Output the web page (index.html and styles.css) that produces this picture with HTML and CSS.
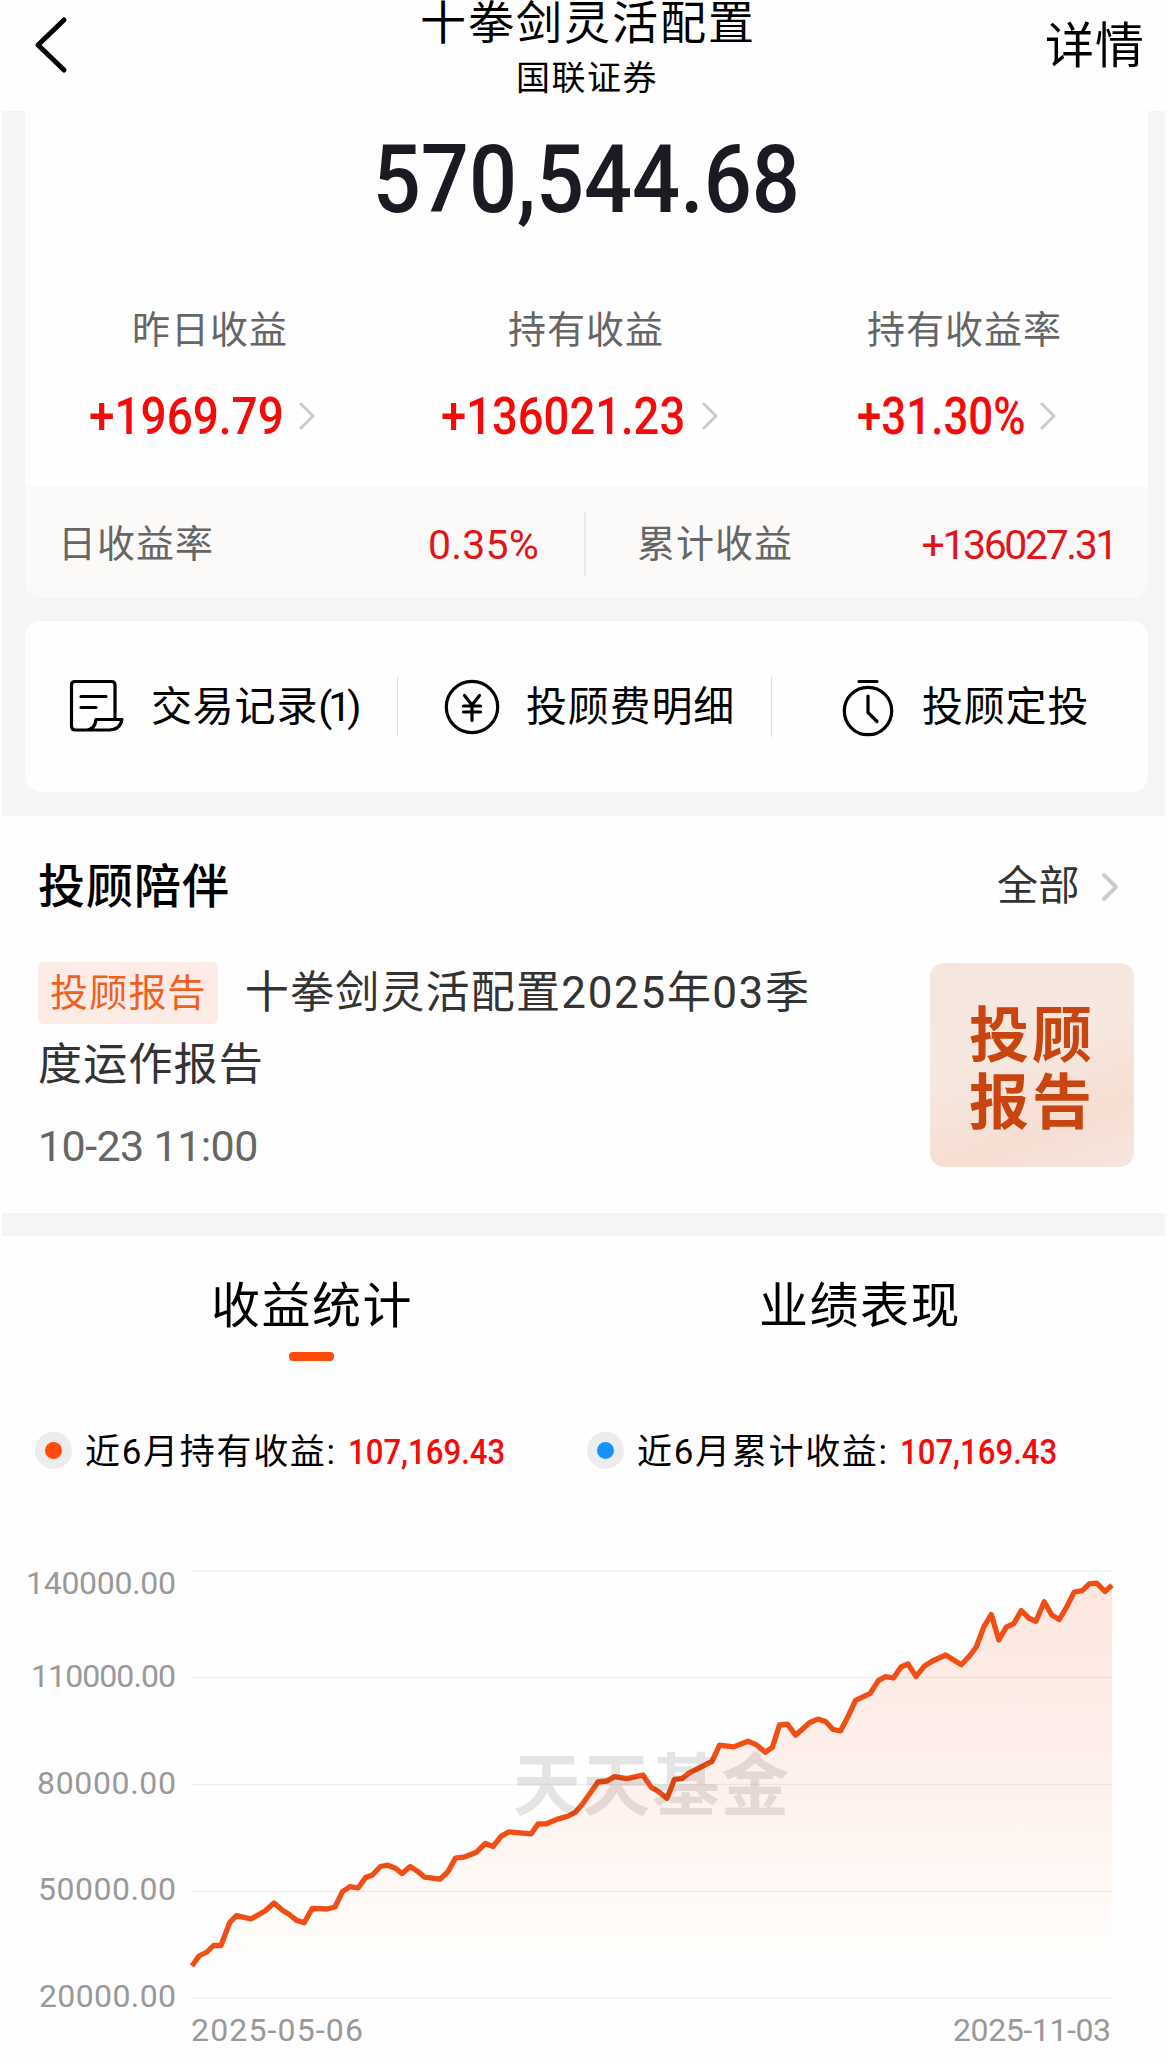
FILE: index.html
```html
<!DOCTYPE html>
<html lang="zh-CN">
<head>
<meta charset="utf-8">
<title>十拳剑灵活配置</title>
<link rel="stylesheet" href="styles.css">
</head>
<body>
<div class="page">
  <header class="topbar">
    <svg class="back" width="34" height="60" viewBox="0 0 34 60"><path d="M30 5 L4 30 L30 55" fill="none" stroke="#000" stroke-width="5" stroke-linecap="round" stroke-linejoin="round"/></svg>
    <div class="titles">
      <h1 class="title">十拳剑灵活配置</h1>
      <p class="subtitle">国联证券</p>
    </div>
    <a class="detail">详情</a>
  </header>

  <div class="backdrop">
    <section class="asset">
      <div class="total"><span class="total-num">570,544.68</span></div>
      <div class="stats">
        <div class="stat stat-a">
          <span class="stat-label">昨日收益</span>
          <span class="stat-value"><b class="red">+1969.79</b><svg class="chev" width="18" height="28" viewBox="0 0 18 28"><path d="M3 2 L15 14 L3 26"/></svg></span>
        </div>
        <div class="stat stat-b">
          <span class="stat-label">持有收益</span>
          <span class="stat-value"><b class="red">+136021.23</b><svg class="chev" width="18" height="28" viewBox="0 0 18 28"><path d="M3 2 L15 14 L3 26"/></svg></span>
        </div>
        <div class="stat stat-c">
          <span class="stat-label">持有收益率</span>
          <span class="stat-value"><b class="red">+31.30%</b><svg class="chev" width="18" height="28" viewBox="0 0 18 28"><path d="M3 2 L15 14 L3 26"/></svg></span>
        </div>
      </div>
      <div class="strip">
        <div class="strip-cell strip-left"><span>日收益率</span><span class="strip-num">0.35%</span></div>
        <div class="strip-cell strip-right"><span>累计收益</span><span class="strip-num strip-num-long">+136027.31</span></div>
      </div>
    </section>

    <nav class="actions">
      <a class="action action-a">
        <svg width="56" height="56" viewBox="0 0 56 56" class="line-icon"><path d="M46 40 V6 Q46 2.500 42.500 2.500 H6 Q2.500 2.500 2.500 6 V47 Q2.500 51 6 51 H40 Q51 51 53 40.500 H27 Q26 50 18 51 M12 17.500 H37 M12 28.500 H27"/></svg>
        <span class="action-text">交易记录<i class="paren">(1)</i></span>
      </a>
      <a class="action action-b">
        <svg width="56" height="56" viewBox="0 0 56 56" class="line-icon"><circle cx="28" cy="28" r="25.700"/><path d="M20.500 16.500 L28 26 L35.500 16.500 M28 26 V41.500 M19.500 27 H36.500 M19.500 33 H36.500"/></svg>
        <span class="action-text">投顾费明细</span>
      </a>
      <a class="action action-c">
        <svg width="52" height="60" viewBox="0 0 52 60" class="line-icon"><circle cx="26" cy="34" r="23.700"/><path d="M17 4.500 H35 M26 19 V35.500 L35 44.500"/></svg>
        <span class="action-text">投顾定投</span>
      </a>
    </nav>
  </div>

  <section class="advice">
    <div class="advice-head">
      <h2>投顾陪伴</h2>
      <a class="all">全部<svg class="chev chev-bold" width="20" height="32" viewBox="0 0 20 32"><path d="M3 4 L15 16 L3 28"/></svg></a>
    </div>
    <div class="advice-body">
      <div class="advice-text">
        <p class="report"><span class="tag">投顾报告</span>十拳剑灵活配置<span class="report-num">2025</span>年<span class="report-num">03</span>季<br>度运作报告</p>
        <time class="when">10-23 11:00</time>
      </div>
      <div class="thumb"><span>投顾</span><span>报告</span></div>
    </div>
  </section>

  <section class="earnings">
    <div class="tabs">
      <a class="tab tab-on">收益统计</a>
      <a class="tab">业绩表现</a>
    </div>
    <div class="legend">
      <div class="legend-item"><i class="dot dot-orange"></i><span class="legend-name">近6月持有收益:</span><b class="legend-num">107,169.43</b></div>
      <div class="legend-item"><i class="dot dot-blue"></i><span class="legend-name">近6月累计收益:</span><b class="legend-num">107,169.43</b></div>
    </div>
    <svg class="chart" width="1168" height="524" viewBox="0 1540 1168 524">
      <defs>
        <linearGradient id="area" gradientUnits="userSpaceOnUse" x1="0" y1="1583" x2="0" y2="1998">
          <stop offset="0" stop-color="#fde6df"/>
          <stop offset="0.5" stop-color="#fef1ed"/>
          <stop offset="0.8" stop-color="#fffbf8"/>
          <stop offset="1" stop-color="#fff"/>
        </linearGradient>
      </defs>
      <path fill="url(#area)" d="M192 1965 L199 1956 207 1952 213.500 1945.500 221 1945.500 229.600 1922.700 236.500 1915.700 251 1919 265 1911 274 1903 282.400 1910.300 289 1914.300 296.600 1920.400 304.200 1922.700 312.300 1908.300 327 1909 335 1907 342.500 1891.600 350 1886.600 358 1888 365.500 1877.600 372.400 1875 380.400 1866.500 387.700 1865.200 395.300 1868.200 402.200 1873.600 410.300 1866.500 418 1871.600 424.800 1877.200 440 1879.200 447.800 1871.900 455.400 1858.200 465 1856.800 476.500 1852.200 485.300 1843.500 493 1846.500 501.300 1836.100 509 1831.800 531.200 1833.800 538 1824 546.500 1823.800 556.800 1819.400 568.300 1816 575.200 1812.400 582.500 1804 598 1782 607 1781 614.500 1776.600 626.900 1778.600 643 1775 651.200 1787.300 658.700 1791.700 667 1798.400 674.500 1779.300 682 1778.600 688.700 1773.300 712 1761.300 719.500 1745.200 733.700 1746.900 748 1741.200 757 1745.200 765.200 1752.200 772.400 1747.200 779.500 1724.800 787.400 1724.200 795.600 1735.200 809.800 1722.500 818 1719.100 825.600 1721.500 833.100 1729.500 840.600 1730.800 848 1716.500 855.600 1700.400 870.200 1693.400 878.500 1680.400 885.600 1676.700 893.500 1678 901 1667 908 1664 916 1676.400 924.200 1666.300 932.500 1661 945.600 1655 961.300 1664.700 969.200 1656.300 976.300 1647 983.800 1626.900 991.300 1614.500 998.800 1639.900 1006.300 1627.200 1013.800 1623.600 1021.300 1610.500 1028.800 1618.200 1036 1621.200 1044.200 1601.800 1051.700 1614.900 1059.200 1619.500 1066.700 1606.800 1074.200 1592.100 1082.500 1590.500 1089.200 1583.800 1096.700 1583.100 1105 1591.500 1112 1585.100 V1998 H192 Z"/>
      <g class="grid"><path d="M192 1571 H1112 M192 1677.500 H1112 M192 1784.500 H1112 M192 1891.500 H1112 M192 1998 H1112"/></g>
      <path class="curve" d="M192 1966 L199 1956 207 1952 213.500 1945.500 221 1945.500 229.600 1922.700 236.500 1915.700 251 1919 265 1911 274 1903 282.400 1910.300 289 1914.300 296.600 1920.400 304.200 1922.700 312.300 1908.300 327 1909 335 1907 342.500 1891.600 350 1886.600 358 1888 365.500 1877.600 372.400 1875 380.400 1866.500 387.700 1865.200 395.300 1868.200 402.200 1873.600 410.300 1866.500 418 1871.600 424.800 1877.200 440 1879.200 447.800 1871.900 455.400 1858.200 465 1856.800 476.500 1852.200 485.300 1843.500 493 1846.500 501.300 1836.100 509 1831.800 531.200 1833.800 538 1824 546.500 1823.800 556.800 1819.400 568.300 1816 575.200 1812.400 582.500 1804 598 1782 607 1781 614.500 1776.600 626.900 1778.600 643 1775 651.200 1787.300 658.700 1791.700 667 1798.400 674.500 1779.300 682 1778.600 688.700 1773.300 712 1761.300 719.500 1745.200 733.700 1746.900 748 1741.200 757 1745.200 765.200 1752.200 772.400 1747.200 779.500 1724.800 787.400 1724.200 795.600 1735.200 809.800 1722.500 818 1719.100 825.600 1721.500 833.100 1729.500 840.600 1730.800 848 1716.500 855.600 1700.400 870.200 1693.400 878.500 1680.400 885.600 1676.700 893.500 1678 901 1667 908 1664 916 1676.400 924.200 1666.300 932.500 1661 945.600 1655 961.300 1664.700 969.200 1656.300 976.300 1647 983.800 1626.900 991.300 1614.500 998.800 1639.900 1006.300 1627.200 1013.800 1623.600 1021.300 1610.500 1028.800 1618.200 1036 1621.200 1044.200 1601.800 1051.700 1614.900 1059.200 1619.500 1066.700 1606.800 1074.200 1592.100 1082.500 1590.500 1089.200 1583.800 1096.700 1583.100 1105 1591.500 1112 1585.100"/>
      <text class="watermark" x="513" y="1810" textLength="276">天天基金</text>
      <g class="axis">
        <text x="26" y="1593.500" textLength="150">140000.00</text>
        <text x="31" y="1686.500" textLength="145">110000.00</text>
        <text x="37" y="1793.500" textLength="139">80000.00</text>
        <text x="38" y="1899.500" textLength="138">50000.00</text>
        <text x="39" y="2006.500" textLength="137">20000.00</text>
        <text x="191" y="2040.500" textLength="172">2025-05-06</text>
        <text x="953" y="2040.500" textLength="158">2025-11-03</text>
      </g>
    </svg>
  </section>
</div>
</body>
</html>
```
FILE: styles.css
```css
* { box-sizing: border-box; margin: 0; padding: 0; }
body {
  background: #fefefe;
  color: #000;
  font-family: Roboto, "Noto Sans CJK SC", sans-serif;
}
.page { width: 1168px; height: 2064px; overflow: hidden; line-height: 1; }
h1, h2, b { font-weight: 400; }
i { font-style: normal; }
svg { flex: none; display: block; }

.topbar { display: flex; justify-content: space-between; height: 111px; padding: 0 23px 0 34px; }
.back { margin-top: 15px; }
.titles { display: flex; flex-direction: column; align-items: center; padding-left: 61px; }
.title { font-size: 46px; letter-spacing: 2px; line-height: 46px; margin-right: -2px; }
.subtitle { font-size: 34px; letter-spacing: 1.5px; line-height: 34px; margin-top: 15px; }
.detail { font-size: 49px; letter-spacing: 1px; line-height: 49px; margin-top: 22px; }

.backdrop { height: 705px; margin: 0 3px 0 2px; padding: 0 17px 0 23px; background: #f5f5f5; }
.asset { display: flex; flex-direction: column; height: 487px; background: #fefefe; border-radius: 0 0 16px 16px; overflow: hidden; }
.total { height: 138px; display: flex; justify-content: center; align-items: center; }
.total-num { font-size: 94px; font-weight: 500; color: #1a1a22; transform: scaleX(.9); }
.stats { display: flex; height: 237px; padding-top: 62px; }
.stat { display: flex; flex-direction: column; gap: 48px; }
.stat-label { font-size: 38px; letter-spacing: 1px; line-height: 38px; color: #666; }
.stat-value { display: flex; align-items: center; height: 38px; }
.red { color: #f50a0a; font-size: 51px; font-weight: 500; transform: scaleX(.9); transform-origin: left; }
.stat-a { width: 352px; padding-left: 64px; }
.stat-b { width: 416px; padding-left: 64px; }
.stat-c { width: 355px; padding-left: 64px; }
.stat-a .stat-label { padding-left: 43px; }
.stat-b .stat-label { padding-left: 67px; }
.stat-c .stat-label { padding-left: 10px; }
.stat-b .red { transform: scaleX(.89); }
.stat-c .red { transform: scaleX(.86); }
.chev { fill: none; stroke: #ccc; stroke-width: 3; stroke-linecap: round; stroke-linejoin: round; margin-left: -7px; }
.stat-b .chev, .stat-c .chev { margin-left: -14px; }
.advice .chev-bold { stroke-width: 4; margin-left: 21px; }
.strip { display: flex; align-items: center; height: 112px; padding: 4px 0 0 33px; background: #fbfaf8; color: #666; font-size: 38px; letter-spacing: 1px; }
.strip-cell { display: flex; justify-content: space-between; align-items: center; height: 64px; }
.strip-left { width: 528px; padding-right: 45px; border-right: 2px solid #e8e8e8; }
.strip-right { width: 530px; padding-left: 51px; }
.strip-num { color: #e0151a; font-size: 41px; letter-spacing: .2px; padding-top: 2px; }
.strip-num-long { letter-spacing: -2.4px; }

.actions { display: flex; align-items: center; height: 171px; margin-top: 23px; background: #fefefe; border-radius: 16px; }
.action { display: flex; align-items: center; height: 60px; font-size: 41px; letter-spacing: .8px; white-space: nowrap; }
.action + .action { border-left: 1px solid #ddd; }
.action-text { padding-top: 2px; }
.line-icon { fill: none; stroke: #000; stroke-width: 3.2; stroke-linecap: round; stroke-linejoin: round; }
.action-a { width: 372px; padding-left: 44px; gap: 26px; }
.action-b { width: 374px; padding-left: 46px; gap: 26px; }
.action-c { padding-left: 70px; gap: 28px; }
.paren { letter-spacing: -4px; }

.advice { height: 397px; padding: 0 34px 0 38px; }
.advice-head { display: flex; justify-content: space-between; align-items: center; height: 139px; padding: 2px 13px 0 0; }
.advice-head h2 { font-size: 47px; font-weight: 500; letter-spacing: 1px; }
.all { display: flex; align-items: center; font-size: 41px; letter-spacing: .5px; color: #333; }
.advice-body { display: flex; justify-content: space-between; }
.advice-text { padding-top: 2px; }
.report { font-size: 44px; letter-spacing: 1.200px; line-height: 72px; color: #333; white-space: nowrap; }
.tag { display: inline-block; height: 62px; margin: -3px 27px 0 0; padding: 0 11px 0 12px; border-radius: 6px; background: #fdece6; color: #f0601f; font-size: 38px; letter-spacing: 1.200px; line-height: 63px; vertical-align: middle; transform: translateY(-2px); }
.report-num { letter-spacing: 1.7px; }
.when { display: block; margin-top: 24px; font-size: 43px; letter-spacing: -.6px; color: #666; }
.thumb { display: flex; flex-direction: column; align-items: center; gap: 7px; width: 204px; height: 204px; margin-top: 8px; padding-top: 44px; border-radius: 14px; background: linear-gradient(160deg, #f5e6dd, #f6e7df 45%, #f6ded2 75%, #f6e6df); color: #c8450f; font-size: 60px; font-weight: 700; letter-spacing: 3px; line-height: 60px; }

.earnings::before { content: ""; display: block; height: 23px; margin: 0 3px 0 2px; background: #f5f5f5; }
.tabs { display: flex; justify-content: space-around; height: 150px; padding: 46px 34px 0 38px; }
.tab { display: flex; flex-direction: column; align-items: center; gap: 21px; font-size: 49px; letter-spacing: 1.500px; }
.tab-on::after { content: ""; width: 45px; height: 9px; border-radius: 4px; background: #ff4a0a; }
.legend { display: flex; height: 154px; padding: 46px 0 0 35px; }
.legend-item { display: flex; align-items: center; width: 552px; height: 37px; }
.dot { width: 37px; height: 37px; border-radius: 50%; border: 10px solid #ececec; }
.dot-orange { background: #ff4a0a; }
.dot-blue { background: #1890ff; }
.legend-name { width: 263px; margin-left: 13px; padding-top: 3px; font-size: 35px; letter-spacing: 1.7px; white-space: nowrap; }
.legend-num { padding-top: 3px; color: #f50a0a; font-size: 35px; font-weight: 500; transform: scaleX(.89); transform-origin: left; }

.grid { fill: none; stroke: #000; stroke-opacity: .06; stroke-width: 1.500; }
.curve { fill: none; stroke: #f04e14; stroke-width: 5.3; stroke-linejoin: round; }
.watermark { font: 700 68px "Noto Sans CJK SC", sans-serif; fill: #000; fill-opacity: .1; }
.axis { font-size: 32px; fill: #999; }
```
